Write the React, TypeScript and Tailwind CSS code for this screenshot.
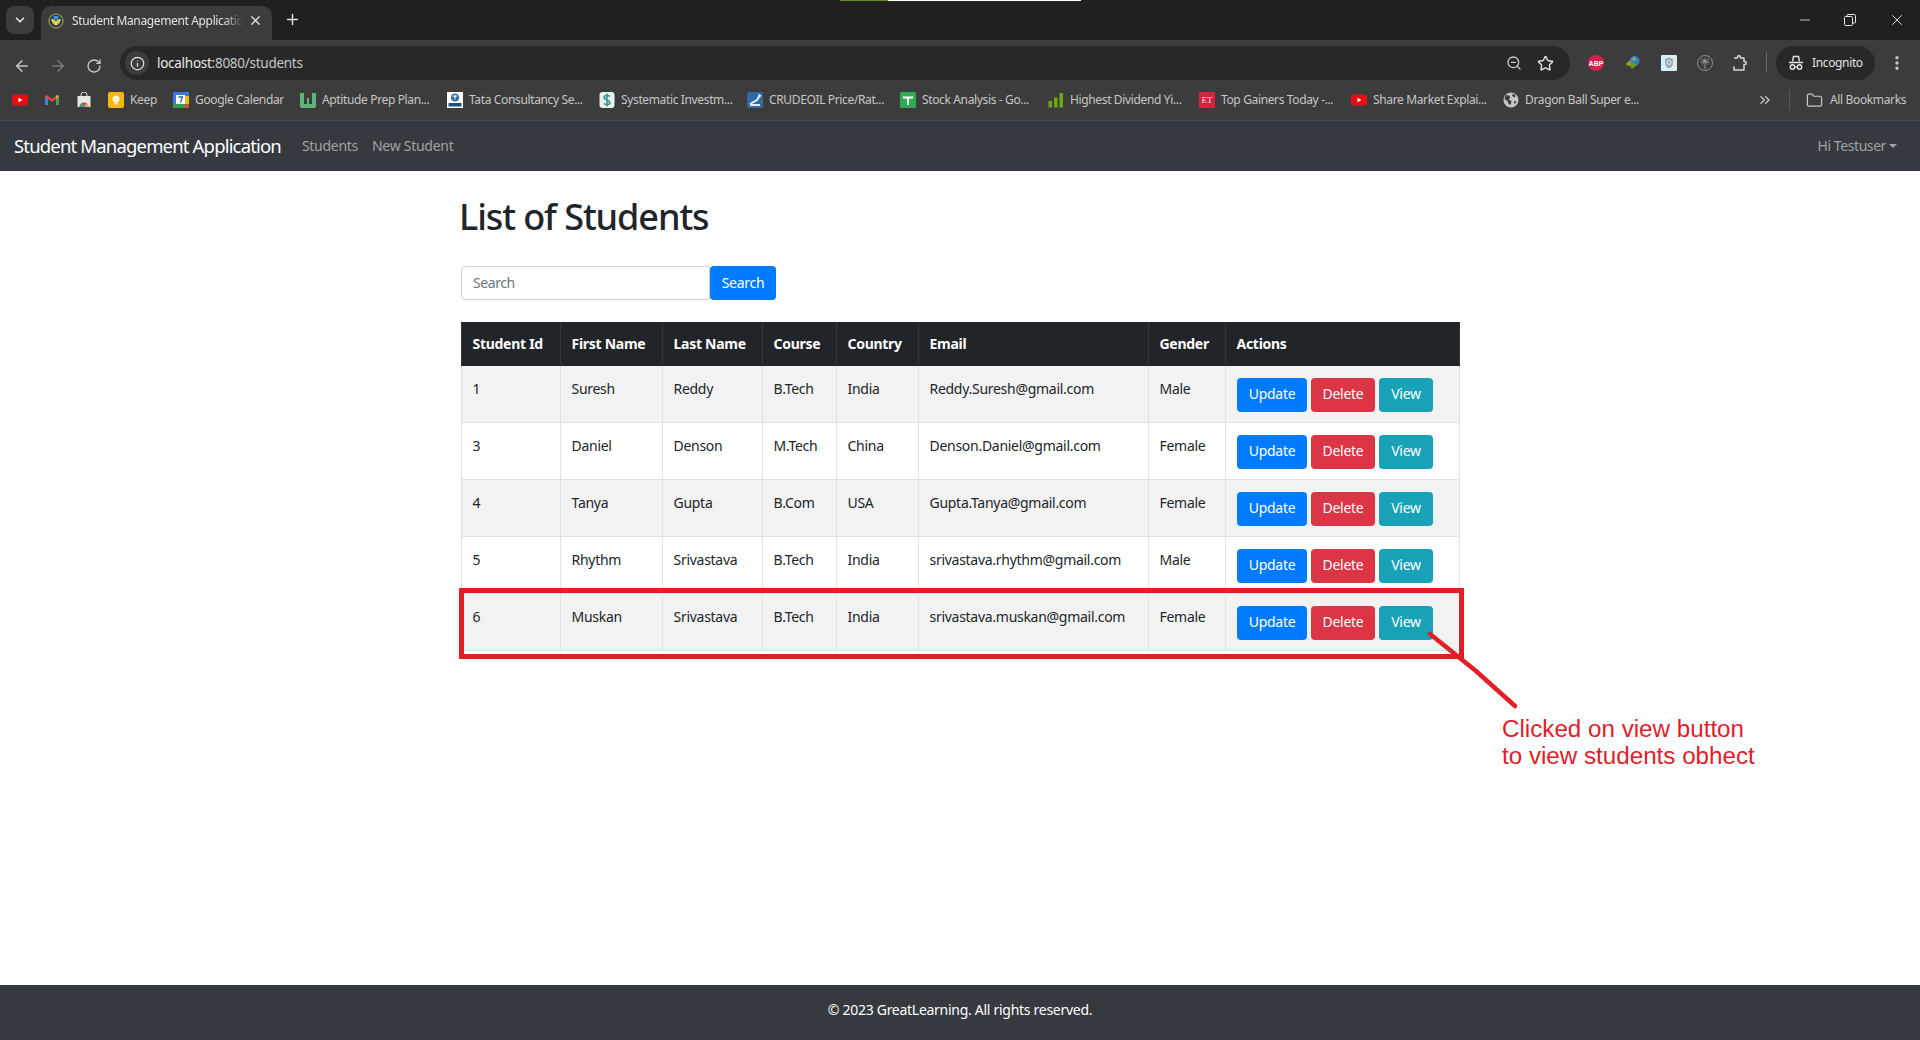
import React from 'react';
import { ArrowLeft, ArrowRight, ChevronDown, ChevronsRight, Folder, Plus, RotateCw, Star, X, Minus, Info, ZoomOut, EllipsisVertical } from 'lucide-react';

const Youtube = () => (
  <svg width="16" height="16" viewBox="0 0 16 16">
    <rect x="0" y="2.5" width="16" height="11" rx="3" fill="#e80c14" />
    <path d="M6.5 5.8v4.4L10.4 8z" fill="#fff" />
  </svg>
);

const Gmail = () => (
  <svg width="16" height="16" viewBox="0 0 16 16">
    <path d="M1 13V4l3 2v7z" fill="#4a7fd6" />
    <path d="M15 13V4l-3 2v7z" fill="#3fa45b" />
    <path d="M1 4l2-1 5 4 5-4 2 1-3 3-4 3-4-3z" fill="#d9483b" />
    <path d="M13 3l2 1-3 3V5z" fill="#e8b93a" />
  </svg>
);

const WebStore = () => (
  <svg width="16" height="16" viewBox="0 0 16 16">
    <path d="M5 4.5V3a3 3 0 0 1 6 0v1.5" stroke="#ddd" strokeWidth="1" fill="none" />
    <rect x="1.5" y="4" width="13" height="11" fill="#e6e6e6" />
    <path d="M3.5 15a4.500 4.500 0 0 1 9 0z" fill="#d9483b" />
    <path d="M3.500 15a4.500 4.500 0 0 1 2-3.700L8 15z" fill="#3fa45b" />
    <path d="M10 11.500a4.500 4.500 0 0 1 2.500 3.500H8z" fill="#e8b93a" />
    <circle cx="8" cy="14" r="1.600" fill="#4a7fd6" />
  </svg>
);

const Keep = () => (
  <svg width="16" height="16" viewBox="0 0 16 16">
    <rect width="16" height="16" rx="2" fill="#f3b80f" />
    <circle cx="8" cy="7" r="3.500" fill="#fdf4d0" />
    <rect x="6.300" y="10.500" width="3.400" height="2" fill="#fdf4d0" />
  </svg>
);

const Calendar = () => (
  <svg width="16" height="16" viewBox="0 0 16 16">
    <rect width="16" height="16" rx="1.500" fill="#3b78e7" />
    <rect x="0" y="12" width="12" height="4" fill="#2f9e54" />
    <rect x="12" y="0" width="4" height="4" fill="#3b78e7" />
    <rect x="12" y="4" width="4" height="8" fill="#f0b90f" />
    <rect x="12" y="12" width="4" height="4" fill="#d9483b" />
    <rect x="3" y="3" width="9" height="9" fill="#fff" />
    <path d="M5.500 5h4L7.500 10.500" stroke="#2a62c4" strokeWidth="1.300" fill="none" />
  </svg>
);

const Wmark = () => (
  <svg width="16" height="16" viewBox="0 0 16 16">
    <path d="M0 1h4v11h3V6h2v6h3V1h4v13a2 2 0 0 1-2 2H2a2 2 0 0 1-2-2z" fill="#5cb67c" />
  </svg>
);

const Tata = () => (
  <svg width="16" height="16" viewBox="0 0 16 16">
    <rect width="16" height="16" fill="#fff" />
    <circle cx="8" cy="5.500" r="4" fill="#2b6ea8" />
    <path d="M5 4c2-1 4-1 6 0-1 .5-2 .8-2.400 1L8 9 7.400 5C7 4.800 6 4.500 5 4z" fill="#fff" />
    <rect x="1.500" y="11" width="13" height="3.500" fill="#1f4f80" />
  </svg>
);

const Dollar = () => (
  <svg width="16" height="16" viewBox="0 0 16 16">
    <rect x="0.500" y="0" width="15" height="16" rx="3" fill="#e9f0f0" />
    <path d="M11 4.500C9.500 3 5 3 5 5.500S11 8 11 10.500 6.500 13 5 11.500M8 1.500v13" stroke="#3b8f90" strokeWidth="1.500" fill="none" />
  </svg>
);

const Crude = () => (
  <svg width="16" height="16" viewBox="0 0 16 16">
    <rect width="16" height="16" rx="2" fill="#2e69a8" />
    <path d="M3 12l7-4 3-5M3 13h10" stroke="#e8f0f8" strokeWidth="2" fill="none" />
    <path d="M11 2l3 1-1 3z" fill="#fff" />
  </svg>
);

const Sheets = () => (
  <svg width="16" height="16" viewBox="0 0 16 16">
    <rect width="16" height="16" rx="1.500" fill="#2faa56" />
    <path d="M3 5.500h10M8 5.500V13" stroke="#fff" strokeWidth="1.800" />
  </svg>
);

const Bars = () => (
  <svg width="16" height="16" viewBox="0 0 16 16">
    <rect x="0.500" y="9" width="3.500" height="6.500" fill="#6ea80c" />
    <rect x="6" y="5.500" width="3.500" height="10" fill="#6ea80c" />
    <rect x="11.500" y="1" width="3.500" height="14.500" fill="#6ea80c" />
  </svg>
);

const EtIcon = () => (
  <span className="flex h-4 w-4 items-center justify-center bg-[#d7213f] font-['Liberation_Serif',serif] text-[9px] leading-none text-[#fbdde2]">ET</span>
);

const Globe = () => (
  <svg width="16" height="16" viewBox="0 0 16 16">
    <circle cx="8" cy="8" r="7.500" fill="#c7c7c7" />
    <path d="M3 3l3 .5 1.500 2-2 2 3 1.500-1 4-2-1-1-3L1.500 7zM10 1.500l3 2.500-2 1.500-2-2zM11 9l2.500.5-2 3z" fill="#3c3c3c" />
  </svg>
);

const Favicon = () => (
  <svg width="16" height="16" viewBox="0 0 16 16">
    <circle cx="8" cy="8" r="7" fill="#123f63" stroke="#c9a63c" strokeWidth="1" />
    <path d="M3 6.500c2.500-1 4 0 5 2 1-2 2.500-3 5-2-1 3.500-3 6-5 6s-4-2.500-5-6z" fill="#e8c84a" />
    <path d="M5 4c2-1.500 4-1.500 6 0-1 1.500-2 2-3 3-1-1-2-1.500-3-3z" fill="#3f9fd8" />
  </svg>
);

const Abp = () => (
  <span className="flex h-4 w-4 items-center justify-center rounded-full bg-[#d2204f] font-['Liberation_Sans',sans-serif] text-[7px] font-bold leading-none text-white">ABP</span>
);

const Idm = () => (
  <svg width="18" height="16" viewBox="0 0 18 16">
    <circle cx="10.500" cy="6" r="5" fill="#3a7fb8" />
    <path d="M8 3l3-1 1 3-3 1z" fill="#7fb860" />
    <path d="M1 9l4-3v2h5l3 2-5 4-2-3H4z" fill="#5f9e1e" />
    <path d="M4 7l3-2v5H4z" fill="#c58a1e" />
  </svg>
);

const ShieldExt = () => (
  <svg width="16" height="16" viewBox="0 0 16 16">
    <rect width="16" height="16" rx="1" fill="#d8edf5" />
    <path d="M8 2.500l4 1.500v4c0 3-2 4.500-4 5.500-2-1-4-2.500-4-5.500V4z" fill="#9da9ae" />
    <circle cx="8" cy="7.500" r="2" fill="none" stroke="#e8f1f4" strokeWidth="1" />
  </svg>
);

const Palm = () => (
  <svg width="16" height="16" viewBox="0 0 16 16" fill="none" stroke="#a2a2a2" strokeWidth="0.800">
    <circle cx="8" cy="8" r="7.500" />
    <path d="M8 6v7M7 13h2M8 6L4 4M8 6l4-2M8 6L3.500 7.500M8 6l4.500 1.500M8 6L5.500 9.500M8 6l2.500 3.500M8 6V3" />
  </svg>
);

const ExtensionsIcon = () => (
  <svg width="16" height="16" viewBox="0 0 16 16" fill="none" stroke="#d6d6d6" strokeWidth="1.500" strokeLinejoin="round">
    <path d="M2 3h3.500V2.200a1.500 1.500 0 0 1 3 0V3H12v3.500h.8a1.500 1.500 0 0 1 0 3H12V15H2v-3.500" />
  </svg>
);

const IncognitoIcon = () => (
  <svg width="16" height="16" viewBox="0 0 16 16" fill="none" stroke="#e3e3e3">
    <path d="M4.500 6.500L5.500 1.500h5l1 5" strokeWidth="1.400" />
    <path d="M1 7.500h14" strokeWidth="1.500" />
    <circle cx="4.500" cy="12" r="2.200" strokeWidth="1.400" />
    <circle cx="11.500" cy="12" r="2.200" strokeWidth="1.400" />
    <path d="M6.700 12h2.600" strokeWidth="1.200" />
  </svg>
);

const bookmarks = [
  { icon: <Youtube />, label: '', width: 'w-[32px]' },
  { icon: <Gmail />, label: '', width: 'w-[32px]' },
  { icon: <WebStore />, label: '', width: 'w-[32px]' },
  { icon: <Keep />, label: 'Keep', width: 'w-[65px]' },
  { icon: <Calendar />, label: 'Google Calendar', width: 'w-[127px]' },
  { icon: <Wmark />, label: 'Aptitude Prep Plan...', width: 'w-[147px]' },
  { icon: <Tata />, label: 'Tata Consultancy Se...', width: 'w-[152px]' },
  { icon: <Dollar />, label: 'Systematic Investm...', width: 'w-[148px]' },
  { icon: <Crude />, label: 'CRUDEOIL Price/Rat...', width: 'w-[153px]' },
  { icon: <Sheets />, label: 'Stock Analysis - Go...', width: 'w-[148px]' },
  { icon: <Bars />, label: 'Highest Dividend Yi...', width: 'w-[151px]' },
  { icon: <EtIcon />, label: 'Top Gainers Today -...', width: 'w-[152px]' },
  { icon: <Youtube />, label: 'Share Market Explai...', width: 'w-[152px]' },
  { icon: <Globe />, label: 'Dragon Ball Super e...', width: 'w-[152px]' },
];

const students = [
  { id: 1, first: 'Suresh', last: 'Reddy', course: 'B.Tech', country: 'India', email: 'Reddy.Suresh@gmail.com', gender: 'Male' },
  { id: 3, first: 'Daniel', last: 'Denson', course: 'M.Tech', country: 'China', email: 'Denson.Daniel@gmail.com', gender: 'Female' },
  { id: 4, first: 'Tanya', last: 'Gupta', course: 'B.Com', country: 'USA', email: 'Gupta.Tanya@gmail.com', gender: 'Female' },
  { id: 5, first: 'Rhythm', last: 'Srivastava', course: 'B.Tech', country: 'India', email: 'srivastava.rhythm@gmail.com', gender: 'Male' },
  { id: 6, first: 'Muskan', last: 'Srivastava', course: 'B.Tech', country: 'India', email: 'srivastava.muskan@gmail.com', gender: 'Female' },
];

const headers = [
  { label: 'Student Id', width: 'w-[99px]' },
  { label: 'First Name', width: 'w-[102px]' },
  { label: 'Last Name', width: 'w-[100px]' },
  { label: 'Course', width: 'w-[74px]' },
  { label: 'Country', width: 'w-[82px]' },
  { label: 'Email', width: 'w-[230px]' },
  { label: 'Gender', width: 'w-[77px]' },
  { label: 'Actions', width: 'w-[234px]' },
];

function BrowserChrome() {
  return (
    <header className="bg-[#3c3c3c] font-['Noto_Sans',sans-serif]">
      {/* Tab strip */}
      <div className="relative flex h-10 items-end bg-[#202020] pl-[6px]">
        <div className="absolute left-[840px] top-0 h-px w-[48px] bg-[#5f8f1e]" />
        <div className="absolute left-[888px] top-0 h-px w-[193px] bg-white" />
        <div className="mb-[6px] flex h-[28px] w-[28px] items-center justify-center rounded-lg bg-[#3c3c3c] text-[#e3e3e3]">
          <ChevronDown size={14} strokeWidth={3} />
        </div>
        <div className="ml-[7px] flex h-[34px] w-[231px] items-center rounded-t-[10px] bg-[#3c3c3c] pb-[5px] pl-[7px]">
          <Favicon />
          <span className="ml-[8px] w-[172px] overflow-hidden whitespace-nowrap text-[12px] tracking-[-0.03em] text-[#e3e3e3] [mask-image:linear-gradient(to_right,black_88%,transparent)]">Student Management Application</span>
          <X size={15} strokeWidth={2} className="ml-[4px] text-[#e3e3e3]" />
        </div>
        <Plus size={17} strokeWidth={2} className="mb-[12px] ml-[12px] text-[#e3e3e3]" />
        <div className="ml-auto mb-[11px] flex items-center text-[#e3e3e3]">
          <Minus size={16} strokeWidth={1.25} className="mr-[31px]" />
          <svg width="12" height="12" viewBox="0 0 12 12" fill="none" stroke="currentColor" className="mr-[32px]">
            <rect x="0.500" y="2.500" width="8" height="9" rx="1" />
            <path d="M3 2.500V1.500a1 1 0 0 1 1-1h6.500a1 1 0 0 1 1 1V8a1 1 0 0 1-1 1H8.500" />
          </svg>
          <X size={18} strokeWidth={1.25} className="mr-[14px]" />
        </div>
      </div>
      {/* Address bar */}
      <div className="flex h-10 items-end">
        <div className="mb-[5px] flex w-[120px] items-center pl-[13px] text-[#c7c7c7]">
          <ArrowLeft size={18} strokeWidth={2} />
          <ArrowRight size={18} strokeWidth={2} className="ml-[18px] text-[#7a7a7a]" />
          <RotateCw size={16} strokeWidth={2} className="ml-[19px]" />
        </div>
        <div className="flex h-[34px] w-[1450px] items-center rounded-full bg-[#282828] pl-[5px] pr-[16px]">
          <div className="flex h-6 w-6 items-center justify-center rounded-full bg-[#3c3c3c] text-[#e3e3e3]">
            <Info size={15} strokeWidth={2} />
          </div>
          <span className="ml-[8px] text-[13.500px] tracking-[-0.02em] text-[#c7c7c7]"><span className="text-[#e8e8e8]">localhost</span>:8080/students</span>
          <ZoomOut size={16} strokeWidth={2} className="ml-auto text-[#c7c7c7]" />
          <Star size={17} strokeWidth={2} className="ml-[15px] text-[#e3e3e3]" />
        </div>
        <div className="mb-[9px] ml-[18px] flex items-center gap-[19.500px]">
          <Abp />
          <Idm />
          <ShieldExt />
          <Palm />
          <ExtensionsIcon />
        </div>
        <div className="mb-[8px] ml-[18px] h-[20px] w-px bg-[#6a6a6a]" />
        <div className="ml-[9px] flex h-[34px] w-[99px] items-center rounded-full bg-[#282828] pl-[12px]">
          <IncognitoIcon />
          <span className="ml-[8px] text-[12px] tracking-[-0.03em] text-[#e3e3e3]">Incognito</span>
        </div>
        <EllipsisVertical size={18} strokeWidth={2.5} className="mb-[8px] ml-[13px] text-[#c7c7c7]" />
      </div>
      {/* Bookmarks bar */}
      <div className="flex h-[41px] items-center border-b border-[#4a4a4a] pl-3">
        {bookmarks.map((b, i) => (
          <div key={i} className={`flex items-center ${b.width}`}>
            {b.icon}
            {b.label && <span className="ml-[6px] whitespace-nowrap text-[12px] tracking-[-0.03em] text-[#c7c7c7]">{b.label}</span>}
          </div>
        ))}
        <ChevronsRight size={16} strokeWidth={2} className="ml-[102px] text-[#c7c7c7]" />
        <div className="ml-[16px] h-[20px] w-px bg-[#5a5a5a]" />
        <Folder size={17} strokeWidth={1.75} className="ml-[16px] text-[#c7c7c7]" />
        <span className="ml-[7px] whitespace-nowrap text-[12px] tracking-[-0.03em] text-[#c7c7c7]">All Bookmarks</span>
      </div>
    </header>
  );
}

function StudentTable() {
  return (
    <div className="relative w-[998px]">
      <table className="w-[998px] table-fixed border-collapse text-[14px] tracking-[-0.02em] text-[#212529]">
        <thead>
          <tr className="h-[43px] bg-[#212529] text-white">
            {headers.map((h) => (
              <th key={h.label} className={`${h.width} border border-[#32383e] border-y-[#212529] pb-[1px] pl-[10.500px] text-left font-bold`}>{h.label}</th>
            ))}
          </tr>
        </thead>
        <tbody>
          {students.map((s, i) => (
            <tr key={s.id} className={`h-[57px] ${i % 2 === 0 ? 'bg-[#f2f2f2]' : 'bg-white'}`}>
              {[s.id, s.first, s.last, s.course, s.country, s.email, s.gender].map((v, j) => (
                <td key={j} className="border border-[#dee2e6] pl-[10.500px] pt-3 align-top leading-[21px]">{v}</td>
              ))}
              <td className="border border-[#dee2e6] pl-[11px] pt-3 align-top">
                <div className="flex gap-1">
                  <button className="h-[34px] w-[70px] rounded-[4px] bg-[#007bff] pb-[3px] text-white">Update</button>
                  <button className="h-[34px] w-[64px] rounded-[4px] bg-[#dc3545] pb-[3px] text-white">Delete</button>
                  <button className="h-[34px] w-[54px] rounded-[4px] bg-[#17a2b8] pb-[3px] text-white">View</button>
                </div>
              </td>
            </tr>
          ))}
        </tbody>
      </table>
      {/* Annotation over the last row */}
      <div className="absolute left-[-2px] top-[266px] h-[71px] w-[1005px] border-[5px] border-[#e31e26]" />
      <svg className="absolute left-[960px] top-[304px]" width="100" height="90" viewBox="0 0 100 90">
        <path d="M9 8L55 45L94 80" stroke="#e31e26" strokeWidth="4.500" strokeLinecap="round" fill="none" />
      </svg>
      <div className="absolute left-[1041px] top-[393px] whitespace-nowrap font-['Liberation_Sans',sans-serif] text-[24.200px] leading-[27px] tracking-normal text-[#e0202a]">
        Clicked on view button
        <br />
        to view students obhect
      </div>
    </div>
  );
}

export default function App() {
  return (
    <div className="flex h-[1040px] flex-col overflow-hidden bg-white font-['Noto_Sans',sans-serif]">
      <BrowserChrome />
      <nav className="flex h-[50px] items-center bg-[#343a40] px-[14px]">
        <span className="text-[18.500px] tracking-[-0.045em] text-white">Student Management Application</span>
        <span className="ml-[21px] pb-[2px] text-[14px] tracking-[-0.02em] text-[#a0a3a6]">Students</span>
        <span className="ml-[14px] pb-[2px] text-[14px] tracking-[-0.02em] text-[#a0a3a6]">New Student</span>
        <span className="ml-auto pb-[2px] text-[14px] tracking-[-0.03em] text-[#a0a3a6]">Hi Testuser</span>
        <span className="ml-[3px] mr-[9px] h-0 w-0 border-x-[4px] border-t-[4px] border-x-transparent border-t-[#a0a3a6]" />
      </nav>
      <main className="flex-1 pl-[461px]">
        <h1 className="-ml-[2px] mt-[16px] text-[36px] font-medium leading-[60px] tracking-[-0.03em] text-[#212529]">List of Students</h1>
        <div className="mt-[19px] flex">
          <div className="flex h-[34px] w-[249px] items-center rounded-l-[4px] border border-[#ced4da] pb-[2px] pl-[11px] text-[14px] tracking-[-0.03em] text-[#6c757d]">Search</div>
          <button className="h-[34px] w-[66px] rounded-[4px] bg-[#007bff] pb-[2px] text-[14px] tracking-[-0.02em] text-white">Search</button>
        </div>
        <div className="mt-[22px]">
          <StudentTable />
        </div>
      </main>
      <footer className="flex h-[55px] items-center justify-center bg-[#343a40] pb-[7px] text-[14px] tracking-[-0.02em] text-white">
        © 2023 GreatLearning. All rights reserved.
      </footer>
    </div>
  );
}
